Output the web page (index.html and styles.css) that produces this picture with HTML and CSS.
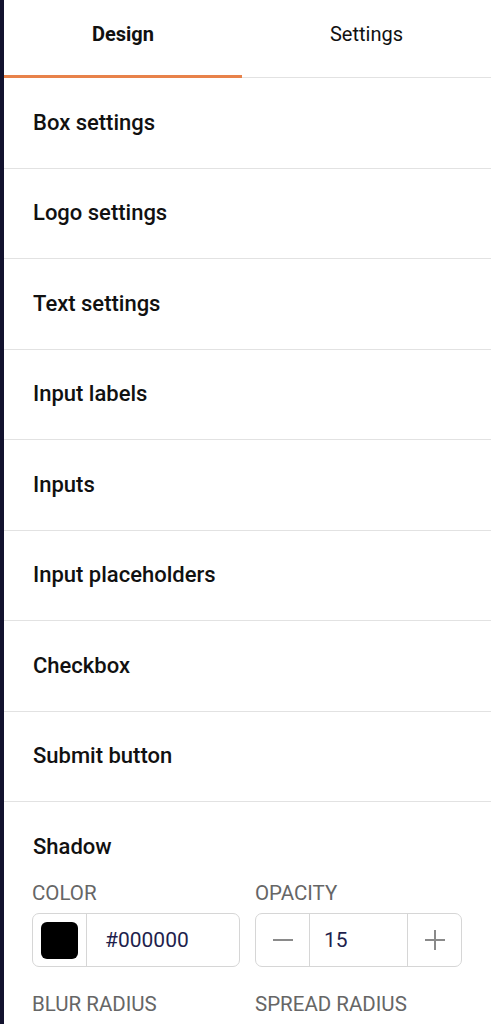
FILE: index.html
```html
<!DOCTYPE html>
<html>
<head>
<meta charset="utf-8">
<link rel="stylesheet" href="styles.css">
</head>
<body>
<div class="panel">
  <div class="tabs">
    <div class="tab active">Design</div>
    <div class="tab">Settings</div>
  </div>
  <div class="row">Box settings</div>
  <div class="row">Logo settings</div>
  <div class="row">Text settings</div>
  <div class="row">Input labels</div>
  <div class="row">Inputs</div>
  <div class="row">Input placeholders</div>
  <div class="row">Checkbox</div>
  <div class="row">Submit button</div>
  <div class="section">
    <div class="section-title">Shadow</div>
    <div class="grid">
      <div class="field">
        <div class="label">COLOR</div>
        <div class="control color">
          <div class="swatch-cell"><div class="swatch"></div></div>
          <div class="value">#000000</div>
        </div>
      </div>
      <div class="field">
        <div class="label">OPACITY</div>
        <div class="control stepper">
          <div class="btn"><svg width="20" height="20" viewBox="0 0 20 20"><path d="M0 10h20" stroke="#8a8a8a" stroke-width="2"/></svg></div>
          <div class="value num">15</div>
          <div class="btn"><svg width="20" height="20" viewBox="0 0 20 20"><path d="M0 10h20M10 0v20" stroke="#8a8a8a" stroke-width="2"/></svg></div>
        </div>
      </div>
      <div class="field">
        <div class="label">BLUR RADIUS</div>
        <div class="control"></div>
      </div>
      <div class="field">
        <div class="label">SPREAD RADIUS</div>
        <div class="control"></div>
      </div>
    </div>
  </div>
</div>
</body>
</html>
```
FILE: styles.css
```css
html, body {
  margin: 0;
  padding: 0;
  background: #ffffff;
}
body {
  font-family: Roboto, "Liberation Sans", sans-serif;
  color: #111111;
  height: 1024px;
  overflow: hidden;
}
.panel {
  border-left: 4px solid #12122e;
  min-height: 1024px;
  box-sizing: border-box;
}
.tabs {
  display: flex;
  height: 78px;
  border-bottom: 1px solid #e2e2e2;
  box-sizing: border-box;
}
.tab {
  flex: 1;
  display: flex;
  align-items: center;
  justify-content: center;
  padding-bottom: 7px;
  font-size: 20px;
  color: #111;
  box-sizing: border-box;
  border-bottom: 3px solid transparent;
  margin-bottom: -1px;
}
.tab.active {
  font-weight: 700;
  border-bottom-color: #e8824a;
}
.tab:first-child {
  flex: 0 0 238px;
}
.row {
  height: 90.5px;
  box-sizing: border-box;
  border-bottom: 1px solid #e2e2e2;
  display: flex;
  align-items: center;
  padding-left: 29px;
  padding-bottom: 1px;
  font-size: 22px;
  font-weight: 500;
  color: #111;
}
.section {
  padding: 33px 29px 0 28px;
}
.section-title {
  font-size: 22px;
  font-weight: 500;
  line-height: 24px;
  margin-bottom: 24px;
  padding-left: 1px;
}
.grid {
  display: grid;
  grid-template-columns: 208px 207px;
  column-gap: 15px;
  row-gap: 27px;
}
.label {
  font-size: 20.5px;
  line-height: 20px;
  color: #666666;
  margin-bottom: 10px;
}
.control {
  height: 54px;
  border: 1px solid #d6d6d6;
  border-radius: 7px;
  box-sizing: border-box;
  display: flex;
  align-items: stretch;
}
.swatch-cell {
  width: 53px;
  border-right: 1px solid #d6d6d6;
  display: flex;
  align-items: center;
  justify-content: center;
}
.swatch {
  width: 37px;
  height: 37px;
  background: #000;
  border-radius: 6px;
}
.value {
  display: flex;
  align-items: center;
  padding-left: 18px;
  font-size: 21px;
  color: #1f1f4d;
}
.stepper .btn {
  width: 53px;
  display: flex;
  align-items: center;
  justify-content: center;
}
.stepper .btn:first-child {
  border-right: 1px solid #d6d6d6;
}
.stepper .btn:last-child {
  border-left: 1px solid #d6d6d6;
}
.stepper .num {
  flex: 1;
  padding-left: 14px;
}
```
